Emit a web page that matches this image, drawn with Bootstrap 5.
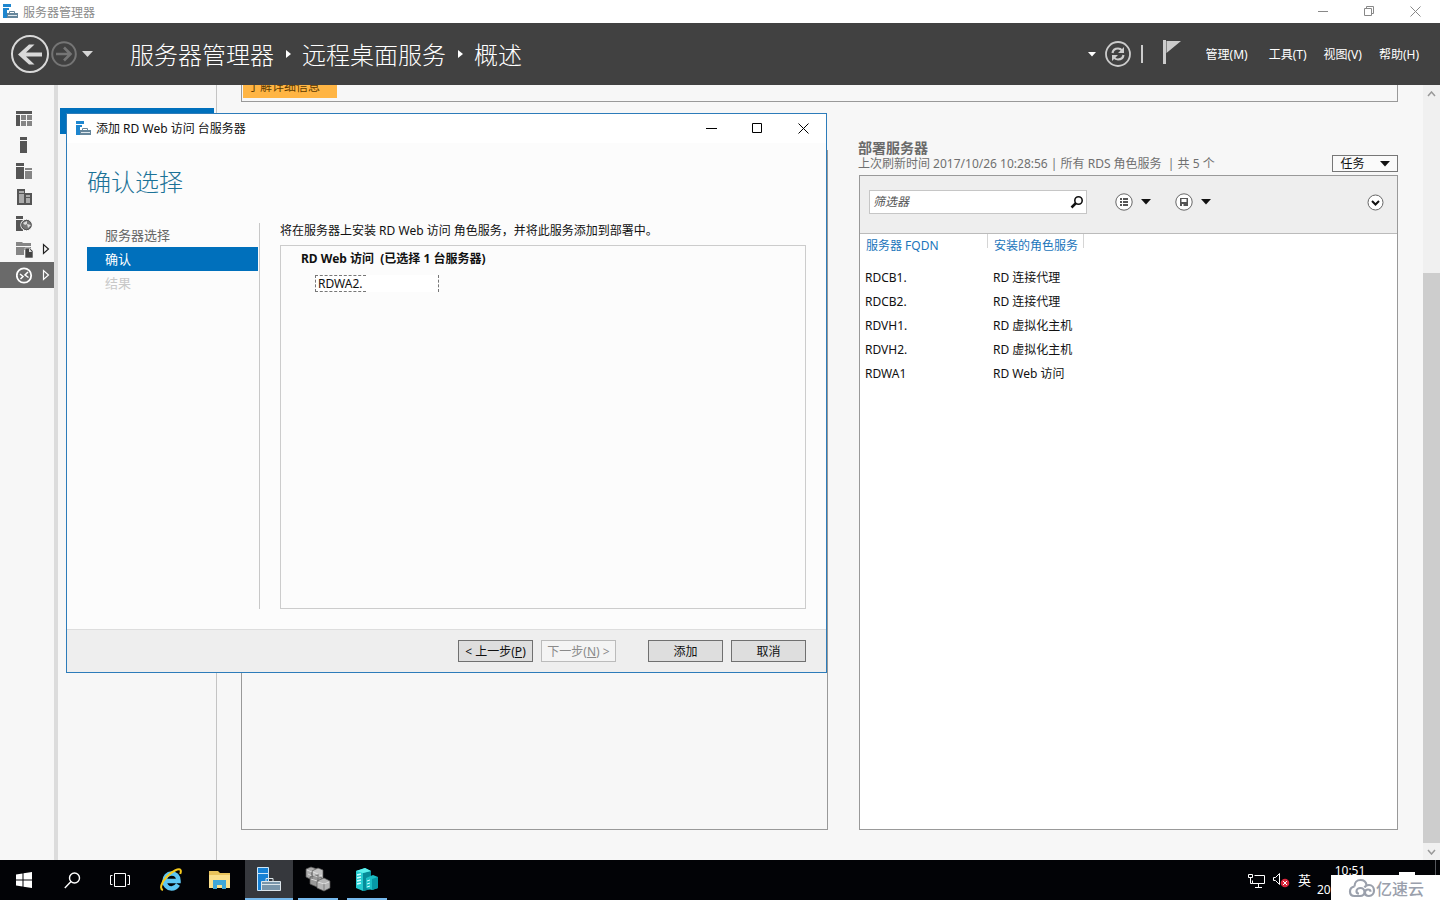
<!DOCTYPE html>
<html lang="zh-CN">
<head>
<meta charset="utf-8">
<meta name="viewport" content="width=device-width, initial-scale=1">
<title>服务器管理器</title>
<link href="https://cdn.jsdelivr.net/npm/bootstrap@5.3.0/dist/css/bootstrap.min.css" rel="stylesheet">
<style>
:root{--ui:"Noto Sans","Noto Sans CJK SC",sans-serif;--blue:#0070bc}
body{font-family:var(--ui);font-size:12px;line-height:16px;color:#111;background:#f7f7f7}
button,input{font:inherit;color:inherit}
svg{display:block;flex:none}
a{color:inherit;text-decoration:none}
.plain{background:none;border:0;padding:0;display:flex;align-items:center;justify-content:center}
.cn{font-family:"Noto Sans CJK SC",sans-serif}
.title-strip{height:23px;color:#8a8a8a;background:#fff;padding-left:3px;padding-right:2px}
.title-strip span{margin-left:5px;line-height:14px}
.title-strip .plain{width:46px;height:21px}
.top-bar{height:62px;background:#414141;color:#fff;padding:0 21px 0 10px}
.crumbs{font-size:24px;line-height:32px;font-weight:300;margin-left:36px;gap:12px}
.crumbs svg{margin-right:-1px}
.menus{gap:17px;margin-left:25px;padding-top:2px}
.side-icons{width:54px;padding-top:21px}
.side-icons a{height:26px;padding-left:16px;gap:6px;color:#222}
.side-icons a.on{background:#6a6a6a;color:#fff}
.side-pages{width:163px;border-left:4px solid #dcdcdc;border-right:1px solid #c4c4c4;padding:23px 2px 0}
.side-pages a{height:26px;background:var(--blue)}
.content{padding:0 25px 30px 24px}
.banner{height:17px;border:1px solid #999;border-top:0;padding:0 1px 3px}
.banner button{width:94px;height:24px;line-height:16px;background:#ffb544;border:0;color:#5d3a00;padding:0 12px 0 0}
.col-left{flex:587 1 0}.col-right{flex:539 1 0}
.pane{border:1px solid #999}
.pane-head{padding:37px 0 3px}
.pane-title{font-size:14px;line-height:17px;font-weight:700;color:#6a6a6a}
.pane-note{color:#707070;line-height:16px;white-space:pre}
.tasks{width:66px;height:17px;border:1px solid #777;background:#fafafa;line-height:14px;gap:15px}
.filter-bar{height:58px;background:#eee;border-bottom:1px solid #bbb;padding:14px 13px 0 9px}
.search-box{width:218px;height:24px;border:1px solid #c6c6c6;background:#fff;padding:0 2px 0 3px}
.search-box input{border:0;outline:0;min-width:0;padding:0;background:none;font-style:italic}
.search-box input::placeholder{color:#555;opacity:1}
.servers{table-layout:fixed;border-collapse:separate;border-spacing:0}
.servers th{font-weight:400;color:#1b75bb;height:31px;padding:4px 0 0 6px;vertical-align:top;background:linear-gradient(#d5d5d5,#d5d5d5) right top/1px 14px no-repeat}
.servers td{height:24px;padding:1px 0 0 5px}
.scroll-rail{width:17px;background:#f0f0f0}
.scroll-rail .plain{height:17px}
.thumb{background:#cdcdcd;flex:570 1 0}
.wizard{position:absolute;left:66px;top:113px;width:761px;height:560px;background:#fcfcfc;border:1px solid #2d7cba}
.wizard-title{height:29px;background:#fff;padding-left:9px}
.wizard-title span{margin-left:5px}
.wizard-title .plain{width:46px;height:29px}
.wizard h1{font-size:24px;line-height:32px;font-weight:300;color:#1b7297;margin:0;padding:22px 20px 25px}
.steps{width:193px;padding-left:20px;border-right:1px solid #c8c8c8;font-size:13px;color:#666}
.steps a{height:24px;padding-left:18px;line-height:24px;display:block;margin-right:1px}
.steps a.on{background:var(--blue);color:#fff}
.steps a.off{color:#c8c8c8}
.confirm-box{border:1px solid #ccc;margin-top:6px;padding:5px 20px}
.pick{width:124px;height:17px;margin:8px 0 0 14px;background:#fff}
.pick span{border:1px dashed #777;border-right:0;padding:0 0 0 2px;width:51px;line-height:15px}
.pick i{border-right:1px dashed #777}
.wizard-foot{height:43px;background:#eee;border-top:1px solid #ddd;padding-right:20px;gap:8px}
.wizard-foot button{width:75px;height:22px;border:1px solid #707070;background:#dedede;padding:1px 0 0;line-height:18px;white-space:nowrap}
.wizard-foot button:disabled{background:#f4f4f4;border-color:#bbb;color:#8a8a8a}
.task-bar{height:40px;background:#020306;color:#fff}
.task-bar .apps .plain{width:48px;height:40px}
.task-bar .open{border-bottom:2px solid #76b9ed}
.task-bar .apps .open{width:40px}
.task-bar .apps .front{background:#36383d;width:48px}
.tray{gap:8px;padding-right:52px;margin-right:4px;border-right:1px solid #55575c}
.clock{width:66px;line-height:19px;font-size:12px}
.mark-box{position:absolute;right:0;bottom:0;width:109px;height:25px;background:#fff;color:#9aa0ac;font:500 16px/24px "Noto Sans CJK SC",sans-serif;padding-right:16px}
.tip{position:absolute;right:25px;bottom:24px;width:16px;height:4px;background:#fff}
</style>
</head>
<body class="vh-100 d-flex flex-column overflow-hidden position-relative">
<svg width="0" height="0" class="position-absolute">
  <symbol id="srv" viewBox="0 0 15 15"><path fill="#1e86cf" d="M0 0h8v3H0zM0 4h6v2H4v8H0z"/><path fill="none" stroke="#66869b" d="M6.500 9V7.500h5V9"/><path fill="#66869b" d="M4 9h11v5H4z"/><path stroke="#dfe8ee" d="M5 11.500h9"/></symbol>
  <symbol id="tri" viewBox="0 0 10 6"><path fill="currentColor" d="M0 0h10L5 5.500z"/></symbol>
  <symbol id="right" viewBox="0 0 8 12"><path fill="none" stroke="currentColor" stroke-width="1.200" d="M1.500 1.500v9L6.500 6z"/></symbol>
</svg>

<div class="title-strip d-flex align-items-center">
  <svg width="15" height="15"><use href="#srv"/></svg>
  <span class="me-auto cn">服务器管理器</span>
  <button class="plain" aria-label="最小化"><svg width="11" height="11"><path stroke="#888" d="M0 5.500h10"/></svg></button>
  <button class="plain" aria-label="还原"><svg width="11" height="11" fill="none" stroke="#888"><path d="M.5 2.500h7v7h-7zM2.500 2.500v-2h7v7h-2"/></svg></button>
  <button class="plain" aria-label="关闭"><svg width="11" height="11"><path stroke="#888" d="M.5.5l10 10m0-10l-10 10"/></svg></button>
</div>

<header class="top-bar d-flex align-items-center">
  <button class="plain" aria-label="后退"><svg width="39" height="39" fill="none"><circle cx="20" cy="19" r="18" stroke="#d9d9d9" stroke-width="2"/><path fill="#d9d9d9" d="M8 19.500L19 9.500h5.500L16 17.500h16v4H16l8.500 8H19z"/></svg></button>
  <button class="plain" aria-label="前进"><svg width="29" height="29" fill="none" stroke="#757575"><circle cx="15" cy="14" r="11.800" stroke-width="2"/><path stroke-width="2.600" d="M7 14h14M15 7.500l6.500 6.500-6.500 6.500"/></svg></button>
  <button class="plain" aria-label="历史记录"><svg width="12" height="6" class="ms-1"><path fill="#d5d5d5" d="M0 0h11L5.500 6z"/></svg></button>
  <nav class="crumbs d-flex align-items-center me-auto cn">
    <a href="#">服务器管理器</a>
    <svg width="5" height="8"><path fill="#fff" d="M0 0l5 4-5 4z"/></svg>
    <a href="#">远程桌面服务</a>
    <svg width="5" height="8"><path fill="#fff" d="M0 0l5 4-5 4z"/></svg>
    <a href="#">概述</a>
  </nav>
  <button class="plain me-2" aria-label="更多"><svg width="8" height="5"><path fill="#fff" d="M0 0h8L4 4.500z"/></svg></button>
  <button class="plain" aria-label="刷新"><svg width="28" height="28" fill="none" stroke="#ccc"><circle cx="14" cy="14" r="12" stroke-width="1.800"/><path stroke-width="2.200" d="M8.500 13c.5-3 2.500-4.500 5.500-4.500 2 0 3 .5 4 2M19.500 15c-.5 3-2.500 4.500-5.500 4.500-2 0-3-.5-4-2"/><path fill="#ccc" stroke="none" d="M20 7v6h-6zM8 21v-6h6z"/></svg></button>
  <svg width="3" height="20" class="ms-2"><path fill="#ccc" d="M1 1h2v18H1z"/></svg>
  <button class="plain ms-3 ps-1" aria-label="通知"><svg width="18" height="28"><path fill="#ccc" d="M0 0h3v24H0zM3.500 1H18L3.500 13z"/></svg></button>
  <nav class="menus d-flex">
    <a href="#" class="me-1">管理(M)</a><a href="#">工具(T)</a><a href="#">视图(V)</a><a href="#">帮助(H)</a>
  </nav>
</header>

<div class="d-flex flex-fill overflow-hidden">
  <nav class="side-icons d-flex flex-column flex-shrink-0">
    <a href="#" class="d-flex align-items-center" aria-label="仪表板"><svg width="17" height="17"><path fill="#555" d="M0 0h16v3H0zM0 4h4v11H0z"/><path fill="#858585" d="M5 4h5v5H5zM11 4h5v5h-5zM5 10h5v5H5zM11 10h5v5h-5z"/></svg></a>
    <a href="#" class="d-flex align-items-center" aria-label="本地服务器"><svg width="17" height="17"><path fill="#555" d="M4 0h7v3H4zM4 4h7v12H4z"/></svg></a>
    <a href="#" class="d-flex align-items-center" aria-label="所有服务器"><svg width="17" height="17"><path fill="#555" d="M0 0h8v3H0zM0 4h8v12H0z"/><path fill="#858585" d="M9 5h7v2H9zM9 8h7v8H9z"/></svg></a>
    <a href="#" class="d-flex align-items-center" aria-label="AD DS"><svg width="17" height="17"><path fill="#555" d="M1 0h8v4h7v12H1z"/><path fill="#aaa" d="M3 2h5v2H3zM3 5h5v9H3zM10 6h4v2h-4zM10 9h4v5h-4z"/></svg></a>
    <a href="#" class="d-flex align-items-center" aria-label="IIS"><svg width="17" height="17"><path fill="#555" d="M0 1h7v3H0zM0 5h7v11H0z"/><circle cx="10.500" cy="10" r="5.700" fill="#777" stroke="#f7f7f7"/><circle cx="10.500" cy="10" r="4.700" fill="none" stroke="#555"/><path fill="#ddd" d="M7 8l4-2v3l-2 1zM11 9l4 1-3 3z"/></svg></a>
    <a href="#" class="d-flex align-items-center" aria-label="文件和存储服务"><svg width="20" height="17"><path fill="#858585" d="M0 1h6l1 1h8v3H0zM0 6h15v3H8v5H0z"/><path fill="#444" stroke="#f7f7f7" stroke-width=".6" d="M9 7h5l3 3v7H9z"/><path fill="#ddd" d="M13 7v4h3z"/></svg><svg width="8" height="12"><use href="#right"/></svg></a>
    <a href="#" class="d-flex align-items-center on" aria-label="远程桌面服务"><svg width="20" height="17"><circle cx="8" cy="8.500" r="7.200" fill="none" stroke="#fff" stroke-width="1.800"/><path fill="none" stroke="#fff" stroke-width="1.500" d="M4 7l3 2.500L4.500 12M12 5L9 8l3.500 2.500"/></svg><svg width="8" height="12"><use href="#right"/></svg></a>
  </nav>
  <nav class="side-pages flex-shrink-0"><a href="#" class="d-block" aria-label="概述"></a></nav>

  <main class="content d-flex flex-column flex-fill">
    <div class="banner d-flex align-items-end overflow-hidden flex-shrink-0"><button class="cn">了解详细信息</button></div>
    <div class="d-flex flex-fill" style="gap:31px">
      <section class="col-left d-flex flex-column pt-5"><div class="pane flex-fill"></div></section>
      <section class="col-right d-flex flex-column">
        <div class="pane-head d-flex justify-content-between align-items-end">
          <div style="margin:0 0 0 -1px"><div class="pane-title cn">部署服务器</div><div class="pane-note">上次刷新时间 2017/10/26 10:28:56 | 所有 RDS 角色服务  | 共 5 个</div></div>
          <button class="tasks plain">任务<svg width="10" height="6"><use href="#tri"/></svg></button>
        </div>
        <div class="pane flex-fill bg-white">
          <div class="filter-bar d-flex align-items-start">
            <label class="search-box d-flex align-items-center"><input class="flex-fill" placeholder="筛选器" aria-label="筛选器"><svg width="14" height="14" fill="none" stroke="#111"><circle cx="8.500" cy="5.500" r="3.700" stroke-width="1.600"/><path stroke-width="2.500" d="M6 8l-4.500 4.500"/></svg></label>
            <div class="d-flex flex-fill align-items-center" style="height:24px;padding-left:28px">
              <button class="plain" style="gap:8px" aria-label="查询"><svg width="18" height="18"><circle cx="9" cy="9" r="8.200" fill="#fff" stroke="#666"/><path fill="#555" d="M5 5h2v2H5zM8 5h5v2H8zM5 8h2v2H5zM8 8h5v2H8zM5 11h2v2H5zM8 11h5v2H8z"/></svg><svg width="10" height="6"><use href="#tri"/></svg></button>
              <button class="plain ms-4" style="gap:8px" aria-label="保存"><svg width="18" height="18"><circle cx="9" cy="9" r="8.200" fill="#fff" stroke="#666"/><path fill="#555" fill-rule="evenodd" d="M5 5h8v8H5zM6.500 6v3h5V6zM7 11v2h1.500v-2z"/></svg><svg width="10" height="6"><use href="#tri"/></svg></button>
              <button class="plain ms-auto" aria-label="展开"><svg width="17" height="17"><circle cx="8.500" cy="8.500" r="7.500" fill="#fff" stroke="#666"/><path fill="none" stroke="#111" stroke-width="2" d="M5 7l3.500 3.500L12 7"/></svg></button>
            </div>
          </div>
          <table class="servers">
            <colgroup><col style="width:128px"><col style="width:96px"></colgroup>
            <thead><tr><th>服务器 FQDN</th><th>安装的角色服务</th></tr></thead>
            <tbody>
              <tr><td>RDCB1.</td><td>RD 连接代理</td></tr>
              <tr><td>RDCB2.</td><td>RD 连接代理</td></tr>
              <tr><td>RDVH1.</td><td>RD 虚拟化主机</td></tr>
              <tr><td>RDVH2.</td><td>RD 虚拟化主机</td></tr>
              <tr><td>RDWA1</td><td>RD Web 访问</td></tr>
            </tbody>
          </table>
        </div>
      </section>
    </div>
  </main>
  <div class="scroll-rail d-flex flex-column flex-shrink-0">
    <button class="plain" aria-label="向上滚动"><svg width="9" height="6"><path fill="none" stroke="#999" stroke-width="1.500" d="M1 5l3.500-4L8 5"/></svg></button>
    <div style="flex:171 1 0"></div><div class="thumb"></div>
    <button class="plain" aria-label="向下滚动"><svg width="9" height="6"><path fill="none" stroke="#999" stroke-width="1.500" d="M1 1l3.500 4L8 1"/></svg></button>
  </div>
</div>

<section class="wizard d-flex flex-column" role="dialog" aria-label="添加 RD Web 访问 台服务器">
  <div class="wizard-title d-flex align-items-center flex-shrink-0">
    <svg width="15" height="15"><use href="#srv"/></svg><span class="me-auto">添加 RD Web 访问 台服务器</span>
    <button class="plain" aria-label="最小化"><svg width="11" height="11"><path stroke="#000" d="M0 5.500h11"/></svg></button>
    <button class="plain" aria-label="最大化"><svg width="11" height="11"><path fill="none" stroke="#000" d="M.5.500h9v9h-9z"/></svg></button>
    <button class="plain" aria-label="关闭"><svg width="11" height="11"><path stroke="#000" d="M.5.500l10 10m0-10l-10 10"/></svg></button>
  </div>
  <h1 class="cn">确认选择</h1>
  <div class="d-flex flex-fill" style="padding:1px 20px 20px 0;gap:20px">
    <nav class="steps flex-shrink-0 cn"><a href="#">服务器选择</a><a href="#" class="on">确认</a><a href="#" class="off">结果</a></nav>
    <div class="d-flex flex-column flex-fill">
      <div>将在服务器上安装 RD Web 访问 角色服务，并将此服务添加到部署中。</div>
      <div class="confirm-box flex-fill">
        <div class="fw-bold" style="white-space:pre">RD Web 访问  (已选择 1 台服务器)</div>
        <div class="pick d-flex justify-content-between"><span>RDWA2.</span><i></i></div>
      </div>
    </div>
  </div>
  <div class="wizard-foot d-flex align-items-center justify-content-end flex-shrink-0">
    <button>&lt; 上一步(<u>P</u>)</button><button disabled>下一步(<u>N</u>) &gt;</button><button class="ms-4">添加</button><button>取消</button>
  </div>
</section>

<footer class="task-bar d-flex flex-shrink-0">
  <div class="apps d-flex">
    <button class="plain" aria-label="开始"><svg width="16" height="16" fill="#fff"><path d="M0 2.500l6.500-1v6H0zM7.500 1.300L16 0v7.500H7.500zM0 8.500h6.500v6L0 13.500zM7.500 8.500H16V16l-8.500-1.300z"/></svg></button>
    <button class="plain" aria-label="搜索"><svg width="17" height="17" fill="none" stroke="#fff" stroke-width="1.400"><circle cx="10.500" cy="6" r="5"/><path d="M7 9.500L.8 16"/></svg></button>
    <button class="plain" aria-label="任务视图"><svg width="22" height="16" fill="none" stroke="#fff"><path d="M5.500 1.500h11v13h-11zM3.500 3.500h-2v9h2M18.500 3.500h2v9h-2"/></svg></button>
    <button class="plain" style="width:53px" aria-label="Internet Explorer"><svg width="24" height="24" fill="none"><path stroke="#5dc6f2" stroke-width="4.500" d="M5 13h14.500c0-5-3-7.500-7-7.500S5.500 9 5.500 13s3 7.500 7 7.500c3 0 5-1.500 6.500-4"/><path stroke="#f5c91c" stroke-width="2" d="M4 22C.5 21 2 15 7.500 9S20 0 21.500 2c.7 1 .5 2-.3 4"/></svg></button>
    <button class="plain" style="width:46px" aria-label="文件资源管理器"><svg width="22" height="20"><path fill="#e9c35b" d="M0 1h9l2 2h10v4H0z"/><path fill="#fbe08c" d="M0 5h21v13H0z"/><path fill="#3fa6d8" d="M4 19v-9h13v9h-4v-4H8v4z"/></svg></button>
    <button class="plain open front" style="margin-left:2px" aria-label="服务器管理器"><svg width="26" height="26"><path fill="#1681d5" stroke="#cde7fa" d="M1.500 1.500h11v6h-11zM1.500 7.500h11v17h-11z"/><path fill="none" stroke="#dce5ea" d="M10 16v-3.500h7V16"/><path fill="#7995aa" stroke="#dce5ea" d="M5.500 15.500h19v9h-19z"/><path fill="none" stroke="#dce5ea" d="M6 18.500h18"/></svg></button>
    <button class="plain open" style="margin-left:5px" aria-label="工具"><svg width="26" height="26" stroke="#555" stroke-width=".7"><path fill="#aaa" d="M1 3l5-2 6 2v9l-5 2-6-3z"/><path fill="#c2c2c2" d="M7 5l6-3 5 2v10l-5 3-6-3z"/><path fill="#999" d="M5 11l6-2 6 3v7l-5 2-7-3z"/><path fill="#b5b5b5" d="M12 15l7-3 6 3v7l-6 3-7-3z"/><path fill="none" stroke="#eee" d="M2 4l5 2M8 6l5 2M13 16l6 2 5-2M3 8l4 2M8 9l5 2 4-2M6 13l6 2"/><path fill="none" stroke="#666" d="M7 6v7M13 8v8M19 18v6"/></svg></button>
    <button class="plain open" style="margin-left:9px" aria-label="服务器"><svg width="24" height="24"><path fill="#25cbd0" d="M1 4l9-3 6 3v18l-8 2-7-3z"/><path fill="#078b99" d="M8 6l8-2v18l-8 2z"/><path fill="#5cf0ed" d="M1 4l9-3 6 3-8 2z"/><path stroke="#caffff" stroke-width="1.300" d="M2 8l4-1M2 11l4-1M2 14l4-1M2 17l4-1"/><path fill="#1bbfc5" d="M11 11l7-3 5 2v11l-6 2-6-2z"/><path fill="#0799a6" d="M17 12l6-2v11l-6 2z"/><path stroke="#caffff" d="M12 14l3-1M12 17l3-1M12 20l3-1"/></svg></button>
  </div>
  <div class="tray d-flex align-items-center ms-auto">
    <svg width="17" height="15" fill="none" stroke="#fff"><path d="M6.500 2.500h10v8h-12v-3M10.500 11v3M7 14.500h7M.5 1.500h4v3h-4zM2.500 5v5.500h2"/></svg>
    <svg width="17" height="16" fill="none" stroke="#fff"><path d="M.5 5.500h2l4-4v11l-4-4h-2z"/><circle cx="12" cy="11" r="4.300" fill="#d9263b" stroke="none"/><path d="M10 9l4 4m0-4l-4 4"/></svg>
    <span class="cn" style="font-size:13px;margin-right:-2px">英</span>
    <button class="plain clock flex-column"><span>10:51</span><span class="align-self-start">20</span></button>
  </div>
</footer>
<div class="tip"></div>
<div class="mark-box d-flex align-items-center justify-content-end">
  <svg width="28" height="20" fill="none" stroke="#9aa0ac" stroke-width="2.200"><path d="M6.500 8.500C3.500 9 2 11 2 13.500c0 3 2 4.500 4.500 4.500H12c3 0 4.500-2 4.500-4 0-2.500-2-4-4-4s-4 1.500-4 3.200c0 1.500 1.200 2.300 2.500 2.300M6.500 8.500C6.500 4.500 9 2 12.500 2c3.500 0 5.500 2 6 5M16.500 9.500c1-2 3-2.500 4.500-2.500 3 0 5 2.500 5 5.500S24 18 21 18c-2.500 0-4-1.500-4-3.500s1.500-3 3-3 2.500 1 2.500 2.200"/></svg>亿速云
</div>
<script src="https://cdn.jsdelivr.net/npm/bootstrap@5.3.0/dist/js/bootstrap.bundle.min.js"></script>
</body>
</html>
